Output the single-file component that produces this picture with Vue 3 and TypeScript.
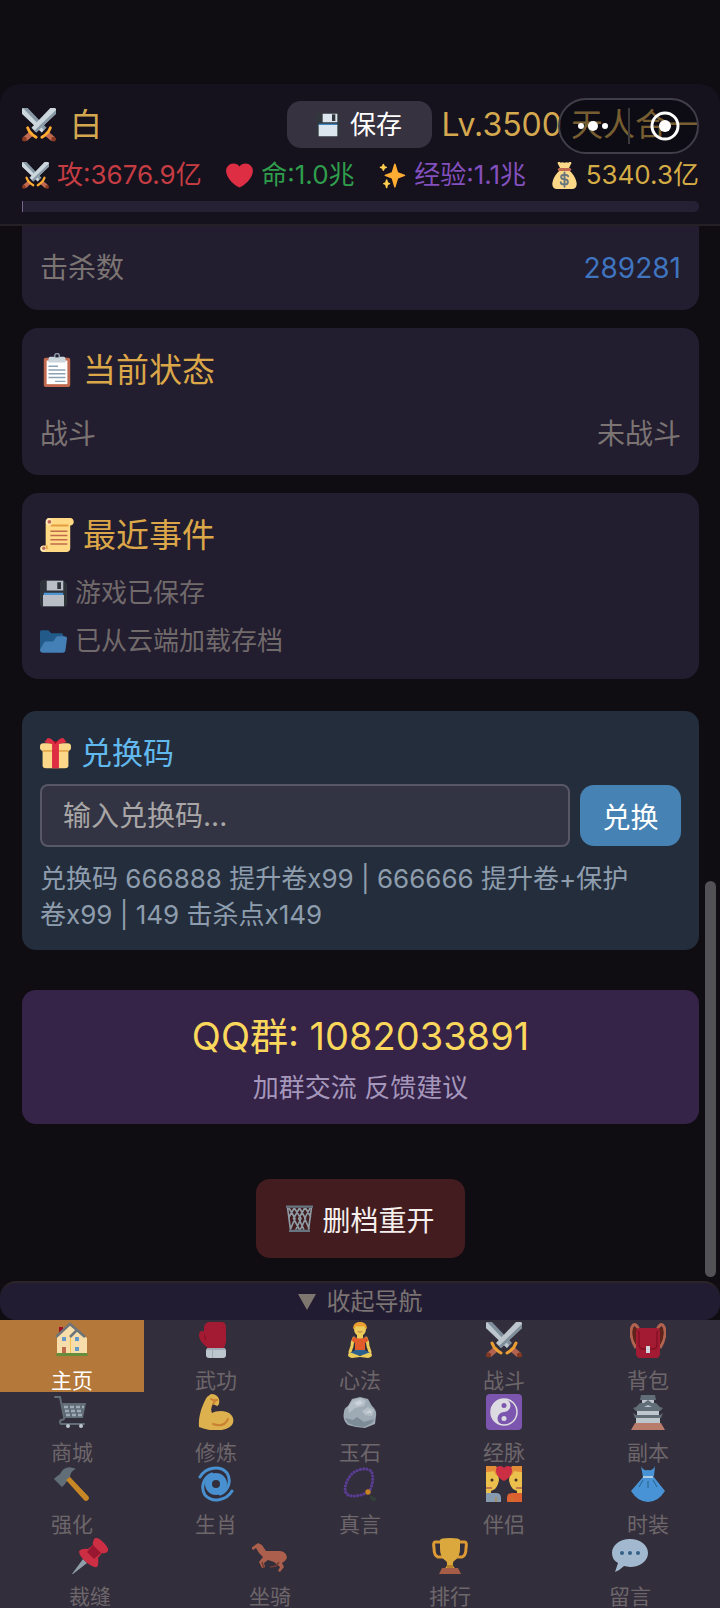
<script setup lang="ts">
import { ref } from 'vue'

interface NavItem {
  icon: string
  label: string
}

const stats = [
  { icon: 'swords', text: '攻:3676.9亿', tone: 'red' },
  { icon: 'heart', text: '命:1.0兆', tone: 'green' },
  { icon: 'sparkles', text: '经验:1.1兆', tone: 'purple' },
  { icon: 'moneybag', text: '5340.3亿', tone: 'gold' },
]

const events = [
  { icon: 'floppy', text: '游戏已保存' },
  { icon: 'folder', text: '已从云端加载存档' },
]

const navRows: NavItem[][] = [
  [
    { icon: 'house', label: '主页' },
    { icon: 'glove', label: '武功' },
    { icon: 'lotus', label: '心法' },
    { icon: 'swords', label: '战斗' },
    { icon: 'backpack', label: '背包' },
  ],
  [
    { icon: 'cart', label: '商城' },
    { icon: 'biceps', label: '修炼' },
    { icon: 'rock', label: '玉石' },
    { icon: 'yinyang', label: '经脉' },
    { icon: 'castle', label: '副本' },
  ],
  [
    { icon: 'hammer', label: '强化' },
    { icon: 'cyclone', label: '生肖' },
    { icon: 'beads', label: '真言' },
    { icon: 'couple', label: '伴侣' },
    { icon: 'dress', label: '时装' },
  ],
  [
    { icon: 'pin', label: '裁缝' },
    { icon: 'horse', label: '坐骑' },
    { icon: 'trophy', label: '排行' },
    { icon: 'speech', label: '留言' },
  ],
]

const active = ref('主页')
const code = ref('')
</script>

<template>
  <div class="app">
    <svg class="sprite" aria-hidden="true">
      <symbol id="swords" viewBox="0 0 36 36">
        <path fill="#8899A6" d="M0 1 1 0h5l20 21-5 5L0 6z" />
        <path fill="#CCD6DD" d="M0 1 1 0l22 23-2 3L0 6z" />
        <path fill="#CCD6DD" d="M36 1 35 0h-5L10 21l5 5L36 6z" />
        <path fill="#8899A6" d="M36 6V2L13 24l2 2z" />
        <path fill="#BF6952" d="m8 25 4 4-7 6-4-4zM28 25l-4 4 7 6 4-4z" />
        <path fill="none" stroke="#FFAC33" stroke-width="3" stroke-linecap="round" d="M6 21l2 4 4 4 3 2M30 21l-2 4-4 4-3 2" />
        <circle cx="2.500" cy="33" r="2.500" fill="#8A3A20" />
        <circle cx="33.500" cy="33" r="2.500" fill="#8A3A20" />
      </symbol>
      <symbol id="floppy" viewBox="0 0 36 36">
        <path fill="#31373D" d="M4 36s-4 0-4-4V4s0-4 4-4h26c1 0 2 1 2 1l3 3s1 1 1 2v26s0 4-4 4H4z" />
        <path fill="#55ACEE" d="M5 17h26v4H5z" />
        <path fill="#D4DBE1" d="M4 20h28v15H4zM9 1h22v13H9z" />
        <path fill="#31373D" d="M23 3h5v9h-5z" />
      </symbol>
      <symbol id="floppy-light" viewBox="0 0 36 36">
        <path fill="#31373D" d="M4 36s-4 0-4-4V4s0-4 4-4h26c1 0 2 1 2 1l3 3s1 1 1 2v26s0 4-4 4H4z" />
        <path fill="#3B88C3" d="M4 16h28v4H4z" />
        <path fill="#DCE6EE" d="M4 18h28v17H4zM10 1h22v13H10z" />
        <path fill="#31373D" d="M24 2h5v10h-5z" />
      </symbol>
      <symbol id="heart" viewBox="0 0 36 36">
        <path fill="#DD2E44" d="M35.885 11.833c0-5.45-4.418-9.868-9.867-9.868-3.308 0-6.227 1.633-8.018 4.129-1.791-2.496-4.71-4.129-8.017-4.129-5.45 0-9.868 4.417-9.868 9.868 0 .772.098 1.52.266 2.241C1.751 22.587 11.216 31.568 18 34.034c6.783-2.466 16.249-11.447 17.617-19.959.17-.721.268-1.469.268-2.242z" />
      </symbol>
      <symbol id="sparkles" viewBox="0 0 36 36">
        <path fill="#FFAC33" d="M34.347 16.893l-8.899-3.294-3.323-10.891c-.128-.42-.517-.708-.956-.708-.439 0-.828.288-.956.708l-3.322 10.891-8.9 3.294c-.393.146-.653.519-.653.938 0 .418.26.793.653.938l8.895 3.293 3.324 11.223c.126.424.516.715.959.715.442 0 .833-.291.959-.716l3.324-11.223 8.896-3.293c.391-.144.652-.518.652-.937 0-.418-.261-.792-.653-.938z" />
        <path fill="#FFCC4D" d="M14.347 27.894l-2.314-.856-.9-3.3c-.118-.436-.513-.738-.964-.738-.451 0-.846.302-.965.737l-.9 3.3-2.313.856c-.393.146-.653.52-.653.938 0 .418.26.793.653.938l2.301.853.907 3.622c.112.444.511.756.97.756.459 0 .858-.312.97-.757l.907-3.622 2.301-.853c.393-.144.653-.519.653-.937 0-.418-.26-.793-.653-.937zM10.009 6.231l-2.364-.875-.876-2.365c-.145-.393-.519-.653-.938-.653-.418 0-.792.26-.938.653l-.875 2.365-2.365.875c-.393.146-.653.52-.653.938 0 .418.26.793.653.938l2.365.875.875 2.365c.146.393.52.653.938.653.418 0 .792-.26.938-.653l.875-2.365 2.365-.875c.393-.146.653-.52.653-.938 0-.418-.26-.792-.653-.938z" />
      </symbol>
      <symbol id="moneybag" viewBox="0 0 36 36">
        <path fill="#FDD888" d="M24 11H12C7 15 3 21 2 27c-1 5 1 9 5 9h22c4 0 6-4 5-9-1-6-5-12-10-16zM9 2c-1-2 2-3 4-1 1-1 3-1 5 0 2-1 4-1 5 0 2-2 5-1 4 1l-3 6H12z" />
        <path fill="#BF6952" d="M11 8h14q2 0 2 2t-2 2H11q-2 0-2-2t2-2z" />
        <path fill="none" stroke="#67757F" stroke-width="2.500" stroke-linecap="round" d="M23 19c-1-2-3-2-5-2-6 0-6 6 0 6s6 7 0 7c-3 0-5-1-5-3M18 14v19" />
      </symbol>
      <symbol id="clipboard" viewBox="0 0 36 36">
        <rect x="4" y="5" width="28" height="31" rx="2" fill="#C1694F" />
        <path fill="#FFF" d="M7 8h22v25H7z" />
        <circle cx="18" cy="3" r="2.500" fill="none" stroke="#8899A6" stroke-width="1.500" />
        <path fill="#CCD6DD" d="M11 4h4l1 1h4l1-1h4q2 0 2 2v4H9V6q0-2 2-2z" />
        <path stroke="#8DA2B2" stroke-width="1.500" d="M9 14h10M9 18h18M9 22h18M9 26h18M16 30h11" />
      </symbol>
      <symbol id="scroll" viewBox="0 0 36 36">
        <path fill="#FFD983" d="M8 0h24c5 0 5 8 0 8v24c0 3-2 4-4 4H4c-5 0-5-7 0-7h2V5z" />
        <path fill="#E39F3D" d="M12 7h18v2H11zM6 29h2v4H6z" />
        <circle cx="9.500" cy="4" r="3.500" fill="#FFE8B6" />
        <circle cx="10" cy="4" r="2" fill="#BF6952" />
        <circle cx="3.500" cy="32.500" r="3" fill="#FFE8B6" />
        <circle cx="4" cy="32" r="1.800" fill="#BF6952" />
        <path stroke="#C1694F" stroke-width="1.500" d="M11 14h18M11 18.500h18M11 23h18M11 27.500h18" />
      </symbol>
      <symbol id="folder" viewBox="0 0 36 36">
        <path fill="#226699" d="M0 29V5q0-2 2-2h8q2 0 3 2l2 2h13q3 0 3 3v17z" />
        <path fill="#4B92CE" d="M0 29 5 20q1-2 3-2h8q2 0 3-2l2-3q1-2 3-2h8q4 0 4 3l-2 15q0 4-4 4H4q-4 0-4-4z" />
      </symbol>
      <symbol id="gift" viewBox="0 0 36 36">
        <path fill="#FDD888" d="M3 12h30v20q0 3-4 3H7q-4 0-4-3z" />
        <rect y="6" width="36" height="9" rx="4" fill="#FDD888" />
        <path fill="#E5A84B" d="M3 14h30v2H3z" />
        <path fill="#DD2E44" d="M5 5 9 0q4 0 7 4h4q3-4 7-4l4 5-9 2H14zM14 5h8v30h-8z" />
        <path fill="#A0041E" d="M16 4h4l-2 3z" />
      </symbol>
      <symbol id="basket" viewBox="0 0 36 36">
        <path fill="none" stroke="#8F9CA6" stroke-width="2.200" d="M2 3l4 30M34 3l-4 30M4 4l8 14-6 14M11 4l9 14-7 15M18 4l8 14-7 15M26 4l7 12M32 4l-7 14 6 14M25 4l-8 14 7 15M18 4l-8 14 8 15M11 4 4 16" />
        <path stroke="#66757F" stroke-width="3" d="M0 2h36M4 34.500h28" />
      </symbol>
      <symbol id="house" viewBox="0 0 36 36">
        <path fill="#A0041E" d="M5 5h4v7H5z" />
        <path fill="#FFE8B6" d="M3 14 16 3l8 7 9 6v18H3z" />
        <path fill="none" stroke="#66757F" stroke-width="2.500" d="M2 15 16 2l15 13M16 15l7-7" />
        <path fill="#FFCC4D" d="M16 16h1v17h-1z" />
        <path fill="#5C9CDB" d="M8 15h4v4H8zM21 15h4v4h-4zM21 25h4v4h-4z" />
        <path fill="#C1694F" d="M8 25h4v8H8z" />
        <path fill="#5C913B" d="M3 31h30l1 3H2z" />
      </symbol>
      <symbol id="glove" viewBox="0 0 36 36">
        <path fill="#B01A31" d="M12 0h12q4 0 4 6v14l-2 6H10C5 22 1 18 1 13q0-4 3-4 1-1 2 1V5q1-5 6-5z" />
        <path fill="#8E0B22" d="M6 10l2 6-1 3z" />
        <rect x="8" y="26" width="20" height="10" rx="3" fill="#CCD6DD" />
        <path fill="#AAB8C2" d="M9 26h18v2H9zM14 28h1v8h-1z" />
      </symbol>
      <symbol id="lotus" viewBox="0 0 36 36">
        <path fill="none" stroke="#FFDC5D" stroke-width="3" stroke-linejoin="round" stroke-linecap="round" d="M12 16q-2 4-2 8l-2 6M24 16q2 4 2 8l2 6" />
        <path fill="#FFDC5D" d="M15 11h6v6h-6z" />
        <path fill="#F4602A" d="M12 15q6 3 12 0 2 0 2 4l-3 2v8H13v-8l-3-2q0-4 2-4z" />
        <path fill="#2A6797" d="M13 28h10l5 3-5 4-5-2-5 2-5-4z" />
        <path fill="#FFDC5D" d="M6 33q0-3 4-2l8 3 8-3q4-1 4 2 0 2-4 3l-8-1-8 1q-4-1-4-3z" />
        <ellipse cx="18" cy="7" rx="6" ry="7" fill="#FFDC5D" />
        <path fill="#FFAC33" d="M11 7q0-7 7-7t7 7q-2 0-3-3-4 1-8 0-1 3-3 3z" />
        <path fill="#C1694F" d="M15 9q3 3 6 0-3 1-6 0z" />
      </symbol>
      <symbol id="backpack" viewBox="0 0 36 36">
        <path fill="none" stroke="#BF6952" stroke-width="3" d="M9 8Q5-1 2 5-1 14 6 26M27 8q4-9 7-3 3 9-4 21" />
        <path fill="#662113" d="M3 6q4-3 5 5l-1 13Q1 16 3 6zM33 6q-4-3-5 5l1 13q6-8 4-18z" />
        <path fill="#B01A31" d="M9 6h18q3 0 3 5v20q0 5-4 5H10q-4 0-4-5V11q0-5 3-5z" />
        <path fill="none" stroke="#8E0B22" stroke-width="1.500" d="M9 9v14q0 4 5 4h8q5 0 5-4V9" />
        <rect x="16" y="24" width="4" height="7" fill="#E1E8ED" />
      </symbol>
      <symbol id="cart" viewBox="0 0 36 36">
        <path fill="none" stroke="#66757F" stroke-width="2" stroke-linecap="round" d="M1 3h5l4 20q1 3-3 3-2 2 0 4h23" />
        <path fill="#66757F" d="M8 9h24l-3 15H11z" />
        <path stroke="#AAB8C2" stroke-width="2.500" stroke-dasharray="4 2" d="M10 13h20M11 17h18M12 21h17" />
        <circle cx="14" cy="32" r="2" fill="#CCD6DD" />
        <circle cx="27" cy="32" r="2" fill="#CCD6DD" />
      </symbol>
      <symbol id="biceps" viewBox="0 0 36 36">
        <path fill="#EFC050" d="M1 33C0 23 4 11 9 3l4-3q6 0 8 5 1 6-2 7l-4-2q-3 4-1 9 3-2 9-2c8 0 14 5 12 12-3 8-20 10-34 4z" />
        <path fill="none" stroke="#D98A32" stroke-width="2" stroke-linecap="round" d="M15 30q11 4 15-5M13 5q3 2 6 1M15 10l2-3" />
      </symbol>
      <symbol id="rock" viewBox="0 0 36 36">
        <path fill="#AAB8C2" d="M2 18q0-4 4-6l4-7 8-2 8 2 4 7q5 4 4 10l-1 8-10 4-9-1-8-2q-6-5-4-13z" />
        <path fill="#C4CFD7" d="M6 13l5-7 8-2 5 3-2 5-9 2-6 5zM20 17l6-4 6 3-2 6-7-1z" />
        <path fill="#8797A2" d="M3 24l8 2 4-3 7 5 10-3-2 4-8 4-9-1-7-3z" />
        <path fill="#DCE4EA" d="M12 9l6-3 3 3-5 3zM23 19l5-3 2 3z" />
      </symbol>
      <symbol id="yinyang" viewBox="0 0 36 36">
        <rect width="36" height="36" rx="4" fill="#855BBB" />
        <circle cx="18" cy="18" r="13" fill="none" stroke="#F0EEF4" stroke-width="1.500" />
        <path fill="#F0EEF4" d="M18 5a13 13 0 0 0 0 26a6.500 6.500 0 0 1 0-13a6.500 6.500 0 0 0 0-13z" />
        <circle cx="18" cy="11.500" r="2.500" fill="#855BBB" />
        <circle cx="18" cy="24.500" r="2.500" fill="#F0EEF4" />
      </symbol>
      <symbol id="castle" viewBox="0 0 36 36">
        <path fill="#C98570" d="M5 29h26l4 7H1z" />
        <path fill="#CCD6DD" d="M6 23h24v6H6zM7 17h22v4H7zM12 6h12v5H12z" />
        <path fill="#66757F" d="M11 1h14l1 5H10zM10 9h4l4-3 4 3h4l4 4 3 1-3 3H6l-3-3 3-1zM3 19l3 2h24l3-2-2 5H5z" />
        <path fill="#CCD6DD" d="m14 13 4-2 4 2z" />
      </symbol>
      <symbol id="hammer" viewBox="0 0 36 36">
        <path fill="#66757F" d="M22 3Q11-2 6 8l-4 3-2 2 8 8 3-3 2-3 3-3q0-7 6-9z" />
        <path fill="#D99123" d="m12 14 4-3 18 19q2 2 0 4t-4 0z" />
      </symbol>
      <symbol id="cyclone" viewBox="0 0 36 36">
        <path fill="none" stroke="#4B9BE0" stroke-width="3" stroke-linecap="round" d="M2 11C8 1 22-1 29 7C34 15 30 25 22 28M34 25C28 35 14 37 7 29C2 21 6 11 14 8" />
        <circle cx="18" cy="18" r="7.500" fill="none" stroke="#4B9BE0" stroke-width="7" />
      </symbol>
      <symbol id="beads" viewBox="0 0 36 36">
        <path fill="none" stroke="#5E3F9D" stroke-width="3.200" stroke-linecap="round" stroke-dasharray="0 3.300" d="M27 26C31 19 32 9 29 5C25 1 14 3 9 9C3 16 1 26 6 29C10 31 18 30 24 27" />
        <circle cx="26" cy="26" r="2.700" fill="#D98A23" />
        <path fill="#33423A" d="m28 29 6 3-1 4-5-3z" />
      </symbol>
      <symbol id="couple" viewBox="0 0 36 36">
        <path fill="#FFD04F" d="M0 4h10q3 5 3 10-1 6-4 9l-4 2v3H0zM36 4H26q-3 5-3 10 1 6 4 9l4 2v3h5z" />
        <path fill="#F69638" d="M0 0h10q4 4 2 10-3-1-4-5-3 1-8 1zM36 0H26q-4 4-2 10 3-1 4-5 3 1 8 1z" />
        <path fill="#8FA6BC" d="M0 27h10q5 0 5 5v4H0z" />
        <path fill="#F0662F" d="M36 27H26q-5 0-5 5v4h15z" />
        <path stroke="#D08A25" d="M10 36v-5M26 36v-5" />
        <circle cx="6" cy="14" r="1.500" fill="#4A3124" />
        <circle cx="30" cy="14" r="1.500" fill="#4A3124" />
        <path stroke="#C1694F" stroke-width="1.500" d="M0 22h6M30 22h6" />
        <path fill="#DD2E44" d="M18 15C8 10 8 0 14 0q3 0 4 2 1-2 4-2c6 0 6 10-4 15z" />
      </symbol>
      <symbol id="dress" viewBox="0 0 36 36">
        <path fill="#4B9FE6" d="M11 0q2 5 7 4 5 1 7-4l-1 10h-1l12 15Q28 36 18 36T1 25l12-14z" />
        <path fill="#BBDDF5" d="M13 10h10v2H13z" />
        <path stroke="#2A6797" d="M13 14l-4 7M18 15v7M23 14l4 7" />
      </symbol>
      <symbol id="pin" viewBox="0 0 36 36">
        <path fill="#99AAB5" d="m11 21 4 4L1 36H0z" />
        <path fill="#DD2E44" d="M23 0q3-1 9 5 5 5 4 8-2 3-6 2l-4 5q1 6-1 9-4 1-11-5T7 13q3-3 9-2l5-4q-1-4 2-7z" />
        <path fill="#A5142F" d="m21 7 8 8-7 6-7-7z" />
      </symbol>
      <symbol id="horse" viewBox="0 0 36 36">
        <path fill="#292F33" d="m4 4 4 2 4 7-4-2zM33 13q4 4 2 9l-2-3z" />
        <path fill="#B8654E" d="M6 5l4 2 4 6h14q7 1 7 7-2 4-5 5l2 4-4 5-2-1 2-4-6-5-6-2-4 3 1 4-3 1-3-6 4-5-4-4-3-5-3 2-2-2z" />
        <path fill="none" stroke="#7A3F32" stroke-width="1.500" d="M18 29l6-1 3-4M10 24l2 6" />
      </symbol>
      <symbol id="trophy" viewBox="0 0 36 36">
        <path fill="none" stroke="#F0A735" stroke-width="3" d="M10 4H3q-2 0-1 6 0 8 4 9h6M26 4h7q2 0 1 6 0 8-4 9h-6" />
        <path fill="#EDB63D" d="M8 2q0-2 10-2t10 2v8c0 8-3 11-6 13-2 2-1 6 1 7H13c2-1 3-5 1-7-3-2-6-5-6-13z" />
        <path fill="#C98A2B" d="M15 27h6v3h-6z" />
        <path fill="#B3634A" d="M10 30h16l3 6H7z" />
      </symbol>
      <symbol id="speech" viewBox="0 0 36 36">
        <path fill="#AFC8E0" d="M18 1C8 1 0 7 0 15q0 7 6 10l-3 9q5-2 9-6l6 1c10 0 18-6 18-14S28 1 18 1z" />
        <circle cx="10" cy="15" r="2" fill="#35668F" />
        <circle cx="18" cy="15" r="2" fill="#35668F" />
        <circle cx="26" cy="15" r="2" fill="#35668F" />
      </symbol>
    </svg>

    <header class="top">
      <div class="top-row">
        <svg class="icon-lg"><use href="#swords" /></svg>
        <h1 class="name">白</h1>
        <button class="save" type="button">
          <svg class="icon-sm"><use href="#floppy-light" /></svg>保存
        </button>
        <span class="level">Lv.3500 天人合一</span>
      </div>
      <div class="stats">
        <span v-for="s in stats" :key="s.icon" class="stat" :class="s.tone">
          <svg class="icon-md"><use :href="'#' + s.icon" /></svg>{{ s.text }}
        </span>
      </div>
      <div class="bar"><div class="bar-fill"></div></div>
      <div class="capsule">
        <button type="button" aria-label="更多">
          <svg width="32" height="28" viewBox="0 0 32 28" fill="#fff">
            <circle cx="4" cy="14" r="3" /><circle cx="16" cy="14" r="5" /><circle cx="28" cy="14" r="3" />
          </svg>
        </button>
        <i class="split"></i>
        <button type="button" aria-label="关闭">
          <svg width="32" height="32" viewBox="0 0 32 32">
            <circle cx="16" cy="16" r="13" fill="none" stroke="#fff" stroke-width="3" /><circle cx="16" cy="16" r="6" fill="#fff" />
          </svg>
        </button>
      </div>
    </header>

    <main class="body">
      <section class="card card-cut">
        <div class="row"><span>击杀数</span><span class="kills">289281</span></div>
      </section>

      <section class="card">
        <h2 class="title"><svg class="icon-lg"><use href="#clipboard" /></svg>当前状态</h2>
        <div class="row status"><span>战斗</span><span>未战斗</span></div>
      </section>

      <section class="card log">
        <h2 class="title"><svg class="icon-lg"><use href="#scroll" /></svg>最近事件</h2>
        <ul class="events">
          <li v-for="e in events" :key="e.text">
            <svg class="icon-md"><use :href="'#' + e.icon" /></svg>{{ e.text }}
          </li>
        </ul>
      </section>

      <section class="redeem">
        <label class="redeem-title" for="code"><svg class="icon-gift"><use href="#gift" /></svg>兑换码</label>
        <form class="redeem-form" @submit.prevent>
          <input id="code" v-model="code" type="text" placeholder="输入兑换码..." />
          <button type="submit">兑换</button>
        </form>
        <p class="hint">兑换码 666888 提升卷x99 | 666666 提升卷+保护<br />卷x99 | 149 击杀点x149</p>
      </section>

      <section class="group">
        <p class="group-no">QQ群: 1082033891</p>
        <p class="group-sub">加群交流 反馈建议</p>
      </section>

      <button class="wipe" type="button"><svg class="icon-bin"><use href="#basket" /></svg>删档重开</button>
      <div class="thumb"></div>
    </main>

    <footer class="dock">
      <button class="fold" type="button">
        <svg width="18" height="16" viewBox="0 0 18 16"><path fill="#7d776f" d="M0 0h18L9 16z" /></svg>收起导航
      </button>
      <nav>
        <div v-for="(r, i) in navRows" :key="i" class="nav-row">
          <button
            v-for="n in r"
            :key="n.label"
            type="button"
            class="nav-item"
            :class="{ on: n.label === active }"
            @click="active = n.label"
          >
            <svg class="icon-nav"><use :href="'#' + n.icon" /></svg>
            <span>{{ n.label }}</span>
          </button>
        </div>
      </nav>
    </footer>
  </div>
</template>

<style>
body {
  margin: 0;
  background: #0f0c12;
}
</style>

<style scoped>
* {
  box-sizing: border-box;
}
.app {
  display: flex;
  flex-direction: column;
  min-height: 100vh;
  padding-top: 84px;
  background: #0f0c12;
  color: #7b7473;
  font-family: Inter, "Noto Sans CJK SC", sans-serif;
  font-size: 28px;
}
.sprite {
  position: absolute;
  width: 0;
  height: 0;
}
svg {
  flex: none;
  display: block;
}
button,
input {
  border: 0;
  padding: 0;
  margin: 0;
  background: none;
  color: inherit;
  font: inherit;
}
h1,
h2,
p,
ul {
  margin: 0;
  padding: 0;
  font-weight: 400;
  list-style: none;
}
.icon-lg {
  width: 34px;
  height: 34px;
}
.icon-gift {
  width: 31px;
  height: 31px;
}
.icon-md,
.icon-bin {
  width: 27px;
  height: 27px;
}
.icon-sm {
  width: 24px;
  height: 26px;
}
.icon-nav {
  width: 36px;
  height: 36px;
}

.top {
  position: relative;
  padding: 17px 21px 12px 22px;
  border-radius: 20px 20px 0 0;
  border-bottom: 2px solid #252026;
  background: #15111d;
}
.top-row {
  display: flex;
  align-items: center;
  height: 47px;
  color: #d4a84f;
  font-size: 32px;
  line-height: 40px;
}
.name {
  flex: 1;
  margin-left: 14px;
  font-size: 32px;
}
.save {
  display: flex;
  align-items: center;
  justify-content: center;
  gap: 10px;
  width: 145px;
  height: 47px;
  margin-right: 10px;
  border-radius: 14px;
  background: #37323f;
  color: #fff;
  font-size: 26px;
}
.level {
  white-space: nowrap;
}
.stats {
  display: flex;
  justify-content: space-between;
  margin-top: 10px;
  font-size: 26px;
  line-height: 34px;
}
.stat {
  display: flex;
  align-items: center;
  gap: 8px;
  white-space: nowrap;
}
.red {
  color: #c53d43;
}
.green {
  color: #2f9e4c;
}
.purple {
  color: #8350bd;
}
.gold {
  color: #d4ac45;
}
.bar {
  height: 11px;
  margin-top: 9px;
  border-radius: 0 5px 5px 0;
  background: #252034;
  overflow: hidden;
}
.bar-fill {
  width: 1px;
  height: 100%;
  background: #74648c;
}
.capsule {
  position: absolute;
  top: 14px;
  right: 21px;
  display: flex;
  align-items: center;
  justify-content: center;
  gap: 19px;
  width: 141px;
  height: 56px;
  border: 2px solid #403e46;
  border-radius: 28px;
  background: rgba(5, 4, 10, 0.45);
}
.split {
  width: 2px;
  height: 36px;
  background: #3b3939;
}

.body {
  position: relative;
  flex: 1;
  display: flex;
  flex-direction: column;
  padding: 0 21px 22px 22px;
}
.card {
  margin-bottom: 18px;
  padding: 18px;
  border-radius: 16px;
  background: #221d2f;
}
.card-cut {
  padding-top: 22px;
  padding-bottom: 22px;
  border-radius: 0 0 16px 16px;
}
.row {
  display: flex;
  justify-content: space-between;
  line-height: 40px;
}
.status {
  margin-top: 20px;
  padding-bottom: 3px;
}
.kills {
  color: #3f74bf;
}
.title {
  display: flex;
  align-items: center;
  gap: 9px;
  color: #dba748;
  font-size: 33px;
  line-height: 48px;
}
.log {
  padding-bottom: 14px;
}
.events {
  padding-top: 10px;
  font-size: 26px;
  line-height: 48px;
  color: #716a6b;
}
.events li {
  display: flex;
  align-items: center;
  gap: 8px;
}
.events svg {
  opacity: 0.85;
}
.redeem {
  margin-top: 14px;
  padding: 20px 18px 17px;
  border-radius: 14px;
  background: #242d3b;
}
.redeem-title {
  display: flex;
  align-items: center;
  gap: 10px;
  color: #62b9ee;
  font-size: 31px;
  line-height: 44px;
}
.redeem-form {
  display: flex;
  align-items: center;
  gap: 10px;
  margin-top: 9px;
}
.redeem-form input {
  flex: 1;
  min-width: 0;
  height: 63px;
  padding: 0 21px;
  border: 2px solid #575766;
  border-radius: 8px;
  background: #333443;
  color: #ddd;
}
.redeem-form input::placeholder {
  color: #a8a6a6;
  opacity: 1;
}
.redeem-form button {
  width: 101px;
  height: 61px;
  border-radius: 14px;
  background: #4682b4;
  color: #fff;
}
.hint {
  margin-top: 14px;
  color: #8e9dae;
  font-size: 26px;
  line-height: 36px;
  white-space: nowrap;
}
.group {
  margin-top: 40px;
  padding: 20px 18px 18px;
  border-radius: 14px;
  background: #352348;
  text-align: center;
}
.group-no {
  color: #fbd85c;
  font-size: 38px;
  line-height: 52px;
}
.group-sub {
  margin-top: 8px;
  color: #a597bb;
  font-size: 26px;
  line-height: 36px;
}
.wipe {
  display: flex;
  align-items: center;
  justify-content: center;
  align-self: center;
  gap: 9px;
  width: 209px;
  height: 79px;
  margin-top: 55px;
  border-radius: 14px;
  background: #421c1e;
  color: #f5efee;
}
.thumb {
  position: absolute;
  right: 4px;
  bottom: 4px;
  width: 11px;
  height: 396px;
  border-radius: 6px;
  background: #525154;
}

.dock {
  background: #332e3c;
}
.fold {
  display: flex;
  align-items: center;
  justify-content: center;
  gap: 11px;
  width: 100%;
  height: 39px;
  border-top: 2px solid #2b2527;
  border-radius: 16px;
  background: #221c32;
  box-shadow: 0 0 0 16px #0f0c12;
  clip-path: inset(0);
  font-size: 24px;
  line-height: 32px;
}
.nav-row {
  display: flex;
}
.nav-item {
  flex: 1;
  display: flex;
  flex-direction: column;
  align-items: center;
  height: 72px;
  padding-top: 2px;
  color: #6d666a;
  font-size: 21px;
  line-height: 20px;
}
.nav-item span {
  margin-top: 13px;
}
.nav-item svg {
  opacity: 0.9;
}
.nav-item.on {
  background: #b4783b;
  color: #fff;
}
</style>
